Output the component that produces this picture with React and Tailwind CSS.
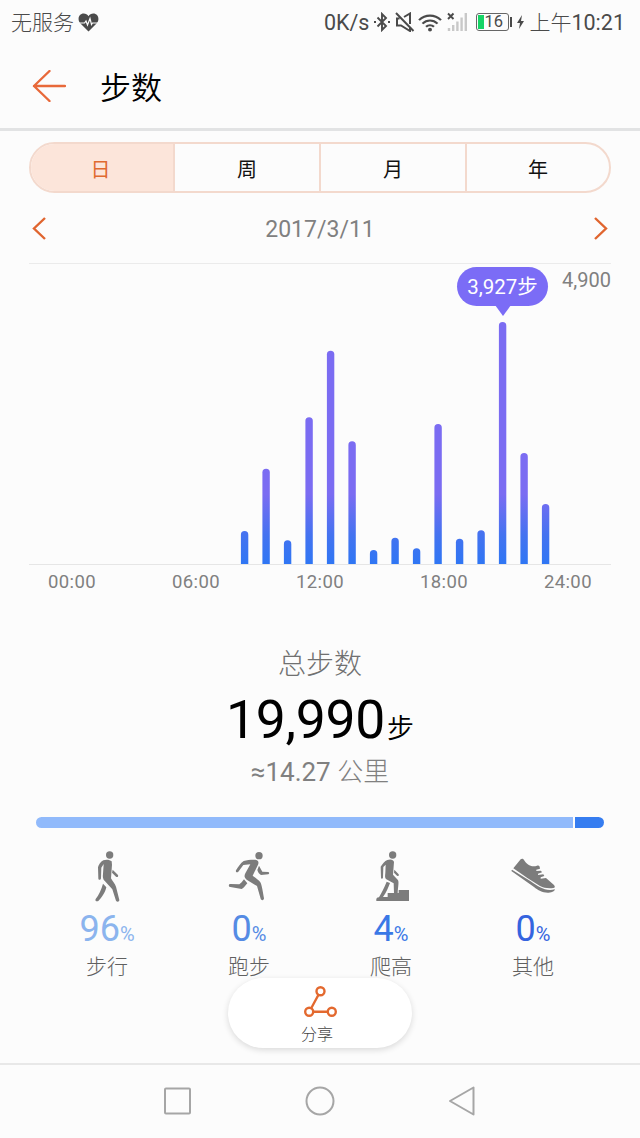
import React from "react";

const hourlySteps = [
  0, 0, 0, 0, 0, 0, 0, 0, 535, 1547, 385, 2381, 3462, 1992, 227, 427, 255,
  2272, 411, 547, 3927, 1802, 974,
];

const tabs = ["日", "周", "月", "年"];
const hours = ["00:00", "06:00", "12:00", "18:00", "24:00"];

const StatusBar = () => (
  <div className="flex h-11 shrink-0 items-center justify-between pl-[11px] pr-[15px] text-[#4a4a4a]">
    <div className="flex items-center">
      <span className="pt-[2px] text-[21px] leading-none font-light">无服务</span>
      <svg className="ml-[4px] h-[19px] w-[21px]" viewBox="0 0 21 19">
        <path
          d="M10.5 18.5 2 10C-1 6 1 .6 5.700 .6c2 0 3.800 1 4.800 2.700C11.500 1.600 13.300 .6 15.300 .6 20 .6 22 6 19 10z"
          fill="currentColor"
        />
        <path
          d="M0 10h6.500l1.500-2 1.500 4 2.500-6.500 1.500 6 1-1.500H21"
          fill="none"
          stroke="#fcfcfc"
          strokeWidth="1.200"
        />
      </svg>
    </div>
    <div className="flex items-center">
      <span className="pt-[2px] text-[21.500px] leading-none">0K/s</span>
      <svg className="ml-[5px] h-5 w-4" viewBox="0 0 16 20" fill="none" stroke="currentColor" strokeWidth="1.900">
        <path d="M3.500 5.500 12 14l-4 4V2l4 4-8.500 8.500" />
        <path d="M0 10h2M14 10h2" strokeWidth="2" />
      </svg>
      <svg className="ml-[5px] h-5 w-5" viewBox="0 0 20 20" fill="none" stroke="currentColor" strokeWidth="2">
        <path d="M1 1l17.500 18M4.500 6.500H2v7h4l9 5.500v-3M9 5l6-3.500V12" />
      </svg>
      <svg className="ml-[3px] h-[19px] w-6" viewBox="0 0 23 20" preserveAspectRatio="none" fill="none" stroke="currentColor" strokeWidth="2.200">
        <path d="M1 7.500c6-6.300 15-6.300 21 0M4.300 11.200c4.200-4.300 10.200-4.300 14.400 0M7.700 14.500c2.200-2.200 5.400-2.200 7.600 0" />
        <circle cx="11.500" cy="17.500" r="1.900" fill="currentColor" stroke="none" />
      </svg>
      <svg className="ml-[5px] h-5 w-[21px]" viewBox="0 0 21 20">
        <path d="M1 1.500l5.500 5.500M6.500 1.500L1 7" stroke="currentColor" strokeWidth="1.900" />
        <path
          d="M2 19v-3M6.200 19v-6M10.400 19v-9.500M14.600 19V5.500M18.800 19V1"
          stroke="#c8c8c8"
          strokeWidth="2.400"
        />
      </svg>
      <div className="ml-[8px] flex h-[18px] w-[33px] items-center rounded-[3px] border border-[#666] p-[1px]">
        <div className="h-full w-[6px] bg-[#16d365]" />
        <span className="pt-px text-[16.500px] leading-none">16</span>
      </div>
      <div className="ml-px h-[10px] w-[2px] bg-[#4a4a4a]" />
      <svg className="ml-[5px] h-[14px] w-[7px]" viewBox="0 0 7 14">
        <path d="M5 0 0 8h3l-1 6 5-8H4z" fill="currentColor" />
      </svg>
      <span className="ml-[5px] pt-[2px] text-[21px] leading-none font-light">上午</span>
      <span className="pt-[2px] text-[21.500px] leading-none">10:21</span>
    </div>
  </div>
);

const Header = () => (
  <header className="flex h-[87px] shrink-0 items-center border-b-[3px] border-[#e2e3e4] pl-8">
    <svg className="h-8 w-[34px]" viewBox="0 0 34 32" fill="none" stroke="#e8693a" strokeWidth="2.400" strokeLinecap="round" strokeLinejoin="round">
      <path d="M33 16H2M17.500 1 2 16l15.500 15" />
    </svg>
    <h1 className="ml-[34px] pt-[4px] text-[31px] leading-none text-black font-[350]">步数</h1>
  </header>
);

const Tabs = () => (
  <div className="mt-[11px] grid h-[51px] shrink-0 grid-cols-[142px_146px_146px_1fr] overflow-hidden rounded-full border-2 border-[#f3d9cd]">
    {tabs.map((tab, i) => (
      <button
        key={tab}
        className={`pt-[4px] text-[20px] ${
          i === 0 ? "bg-[#fce5da] pr-[3px] text-[#e06a30]" : "border-l-2 border-[#f3d9cd] text-[#111]"
        }`}
      >
        {tab}
      </button>
    ))}
  </div>
);

const DateRow = () => (
  <div className="flex h-[71px] shrink-0 items-center justify-between border-b border-[#ebebeb] px-[3px]">
    <svg className="h-[23px] w-[14px]" viewBox="0 0 14 23" fill="none" stroke="#e0652f" strokeWidth="2.400">
      <path d="M13 1 2 11.500 13 22" />
    </svg>
    <span className="pt-[4px] text-[23px] text-[#808080]">2017/3/11</span>
    <svg className="h-[23px] w-[14px]" viewBox="0 0 14 23" fill="none" stroke="#e0652f" strokeWidth="2.400">
      <path d="M1 1l11 10.500L1 22" />
    </svg>
  </div>
);

const Chart = () => (
  <div className="relative shrink-0">
    <svg className="block h-[300px] w-[582px]" viewBox="29 0 582 300">
      <defs>
        <linearGradient id="steps" gradientUnits="userSpaceOnUse" x1="0" y1="300" x2="0" y2="230">
          <stop offset="0" stopColor="#2f76f4" />
          <stop offset="0.400" stopColor="#4373f0" />
          <stop offset="1" stopColor="#7b6cf2" />
        </linearGradient>
      </defs>
      {hourlySteps.map((steps, hour) => {
        if (!steps) return null;
        const x = 72.6 + hour * 21.5 - 3.7;
        const top = 300 - steps * 0.0616;
        return (
          <path
            key={hour}
            d={`M${x} 300V${top + 3.7}a3.700 3.700 0 0 1 7.400 0V300z`}
            fill="url(#steps)"
          />
        );
      })}
    </svg>
    <span className="absolute right-0 top-[4px] text-[20px] leading-6 text-[#808080]">4,900</span>
    <div className="absolute left-[428px] top-[3px] flex h-[39px] w-[91px] items-center justify-center rounded-full bg-[#7b6cf6] pt-px text-[20.500px] text-white">
      3,927步
      <svg className="absolute left-[38px] top-[38px] h-[11px] w-4" viewBox="0 0 16 12" preserveAspectRatio="none">
        <path d="M0 0h16L8 12z" fill="#7b6cf6" />
      </svg>
    </div>
    <div className="flex justify-between border-t border-[#e6e6e6] pl-[19px] pr-[19px] pt-[5px] text-[18.500px] leading-6 tracking-[0.400px] text-[#808080]">
      {hours.map((hour) => (
        <span key={hour}>{hour}</span>
      ))}
    </div>
  </div>
);

const Summary = () => (
  <div className="flex shrink-0 flex-col items-center pt-[51px]">
    <p className="text-[28px] leading-[40px] font-light text-[#707070]">总步数</p>
    <p className="mt-[3px] flex h-[64px] items-baseline leading-[64px] text-black">
      <span className="text-[53.500px] tracking-[-0.300px]">19,990</span>
      <span className="ml-[2px] text-[27px] font-[350]">步</span>
    </p>
    <p className="h-10 text-[26px] leading-[40px] text-[#808080]">
      ≈14.27 <span className="font-light">公里</span>
    </p>
  </div>
);

const WalkIcon = () => (
  <svg className="h-[54px] w-12" viewBox="189 135 144 162" fill="#7c7c7c">
    <circle cx="269" cy="150" r="11" />
    <path d="M250 166c8-3 20-2 25 3l1 10-3 41c5 9 12 16 15 25l10 40c0 6-7 7-10 2l-11-34-22-24c-7-7-7-14-6-23l2-29-7 11-1 32c-1 6-8 6-8 0l-1-33c2-8 8-17 16-21z" />
    <path d="M249 236l10 11c-3 14-13 31-24 41-5 3-11-1-8-6 10-13 17-28 22-46zM278 194l16 16c2 5-2 8-6 5l-12-12z" />
  </svg>
);

const RunIcon = () => (
  <svg className="h-[54px] w-12" viewBox="615 135 144 162" fill="#7c7c7c">
    <circle cx="717" cy="152" r="11" />
    <path d="M671 168c12-3 29-5 38-3 6 2 8 7 5 14l-16 33c8 6 18 12 23 20 5 9 8 33 11 48 0 7-8 7-10 1l-11-38-31-19c-7-6-8-11-4-19l15-27-21 2-15 20c-4 4-9 1-7-4 6-10 14-22 23-28z" />
    <path d="M717 182l10 18 18 1c4 1 3 6 0 7l-22 2c-6-3-9-9-11-15zM672 223l10 12c-5 6-11 14-17 17l-34-6c-6-1-6-9 0-9l27 1c5-3 9-9 14-15z" />
  </svg>
);

const ClimbIcon = () => (
  <svg className="h-[54px] w-12" viewBox="141 135 144 162" fill="#7c7c7c">
    <circle cx="218" cy="150" r="11" />
    <path d="M202 165c9-4 19-1 20 6l-3 38 14 15c5 5 1 20 0 40h-11l-1-29-22-12c-5-3-4-12-3-19l1-25-7 7-1 32c-1 4-6 4-6 0l-1-33c5-8 12-17 20-20z" />
    <path d="M200 230l10 4c-5 14-12 30-21 42h14v-12h33v-9h31v33h-98c-1-6 1-11 8-11 8-14 16-30 23-47zM223 194l13 14c2 4-1 7-5 4l-9-9z" />
  </svg>
);

const ShoeIcon = () => (
  <svg className="h-[54px] w-12" viewBox="567 135 144 162" fill="#7c7c7c">
    <path d="M580 190l22-27c3-3 8-2 10 2 8 13 22 23 39 17 4-1 7 0 8 3l1 6-11 3v4l14-1 3 5-12 4v4l16-2 3 5-11 4v4l16-2 24 21c4 5 3 9-2 9-15 2-29 0-40-6l-38-24z" />
    <path d="M576 194l56 35c24 17 44 31 73 24-1 6-7 9-19 10-18 1-31-7-44-17l-68-48z" />
  </svg>
);

const activities = [
  { label: "步行", value: 96, Icon: WalkIcon, color: "text-[#8bb4ee]" },
  { label: "跑步", value: 0, Icon: RunIcon, color: "text-[#558be4]" },
  { label: "爬高", value: 4, Icon: ClimbIcon, color: "text-[#3a78e6]" },
  { label: "其他", value: 0, Icon: ShoeIcon, color: "text-[#3564df]" },
];

const Activities = () => (
  <div className="mx-[7px] mt-[25px] shrink-0">
    <div className="flex h-[11px] gap-[2px] overflow-hidden rounded-full">
      <div className="flex-1 bg-[#91bafb]" />
      <div className="w-[29px] bg-[#367df0]" />
    </div>
    <div className="mt-[22px] grid grid-cols-4">
      {activities.map(({ label, value, Icon, color }) => (
        <div key={label} className="flex flex-col items-center">
          <Icon />
          <p className={`mt-[4px] flex h-[42px] items-baseline leading-[42px] ${color}`}>
            <span className="text-[36px]">{value}</span>
            <span className="text-[20px]">%</span>
          </p>
          <p className="mt-[2px] text-[21px] leading-[30px] font-light text-[#606060]">{label}</p>
        </div>
      ))}
    </div>
  </div>
);

const ShareButton = () => (
  <button className="absolute bottom-[15px] left-[228px] flex h-[70px] w-[184px] flex-col items-center rounded-full bg-white pr-[6px] pt-[8px] shadow-[0_2px_6px_rgba(0,0,0,0.14)]">
    <svg className="ml-[6px] h-[31px] w-[33px]" viewBox="0 0 33 31" fill="none" stroke="#e3692f" strokeWidth="2.400">
      <circle cx="16.500" cy="5.200" r="4" />
      <circle cx="5.200" cy="25.700" r="4" />
      <circle cx="27.800" cy="25.700" r="4" />
      <path d="M14.500 8.800 7.200 22.200M9.200 25.700h14.600" />
    </svg>
    <span className="mt-[6px] text-[16px] leading-[24px] font-light text-[#444]">分享</span>
  </button>
);

const NavBar = () => (
  <nav className="flex h-[75px] shrink-0 items-center justify-center gap-[114px] border-t-2 border-[#e8e8e8] pb-[2px]">
    <svg className="h-7 w-7" viewBox="0 0 28 28" fill="none" stroke="#a6a6a6" strokeWidth="2">
      <rect x="2" y="1.500" width="25" height="25" rx="1" />
    </svg>
    <svg className="h-[30px] w-[30px]" viewBox="0 0 30 30" fill="none" stroke="#a6a6a6" strokeWidth="2">
      <circle cx="15" cy="15" r="13.500" />
    </svg>
    <svg className="h-[30px] w-7" viewBox="0 0 28 30" fill="none" stroke="#a6a6a6" strokeWidth="2" strokeLinejoin="round">
      <path d="M24.500 1.500v27L1 15z" />
    </svg>
  </nav>
);

export default function App() {
  return (
    <div className="flex h-[1138px] w-[640px] flex-col overflow-hidden bg-[#fcfcfc] font-[Roboto,'Noto_Sans_CJK_SC',sans-serif]">
      <StatusBar />
      <Header />
      <main className="relative flex min-h-0 flex-1 flex-col px-[29px]">
        <Tabs />
        <DateRow />
        <Chart />
        <Summary />
        <Activities />
        <ShareButton />
      </main>
      <NavBar />
    </div>
  );
}
